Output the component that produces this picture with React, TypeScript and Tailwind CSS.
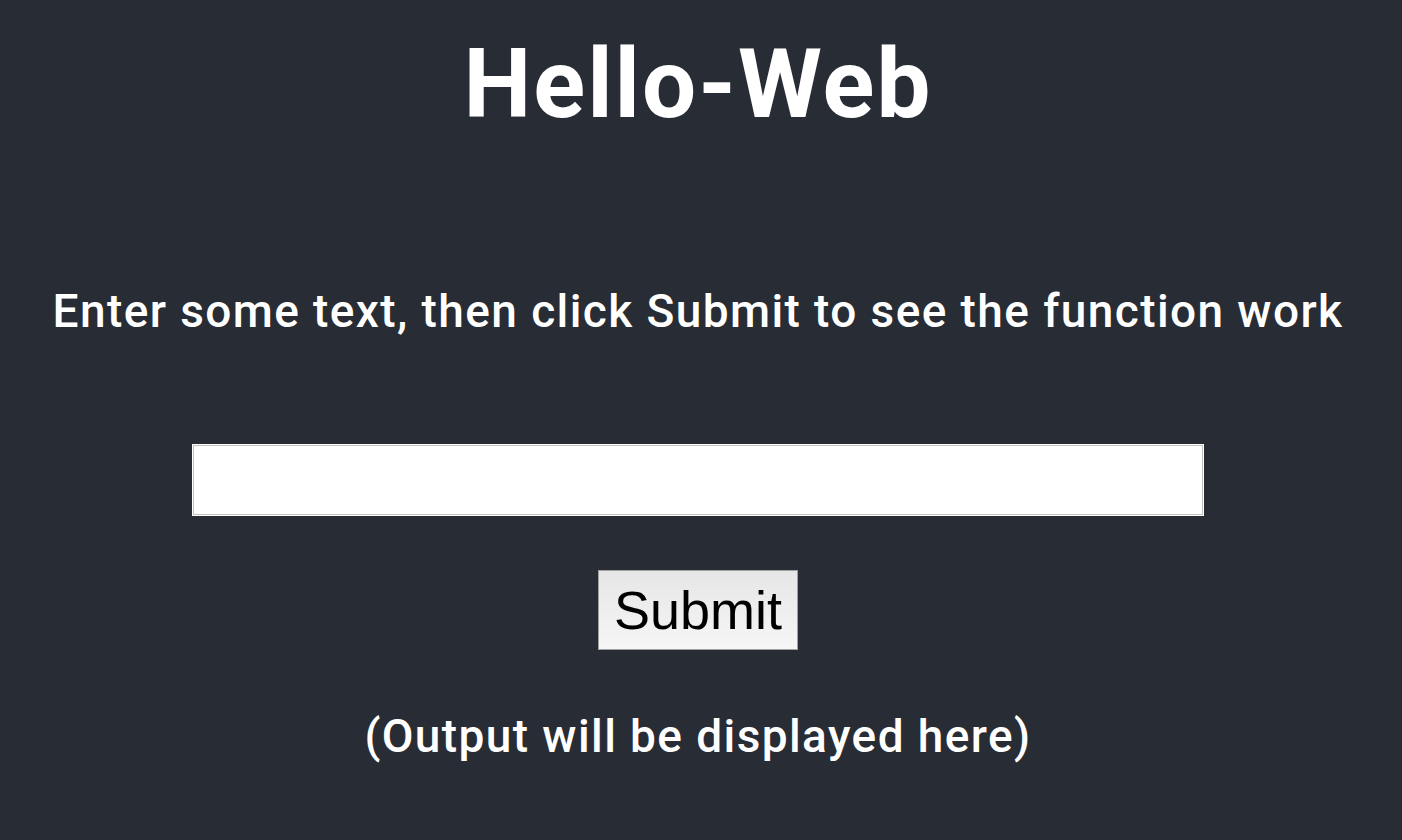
import { useState } from 'react';

export default function App() {
    const [text, setText] = useState('');
    const [output, setOutput] = useState('(Output will be displayed here)');

    return (
        <div className="min-h-screen bg-[#282c34] text-white flex flex-col items-center pt-[36px] pr-[6px] font-['Roboto',sans-serif]">
            <h1 className="text-[96px] leading-none font-bold tracking-[2px]">Hello-Web</h1>

            <p className="mt-[156px] text-[46px] leading-none font-medium tracking-[1.4px]">
                Enter some text, then click Submit to see the function work
            </p>

            <input
                type="text"
                value={text}
                onChange={(e) => setText(e.target.value)}
                className="mt-[110px] w-[1012px] h-[72px] bg-white text-black border border-white shadow-[inset_0_0_0_1px_#c2c2c2] outline-none px-3 text-3xl"
            />

            <button
                onClick={() => setOutput(text || '(Output will be displayed here)')}
                className="mt-[54px] w-[200px] h-[80px] border border-[#a0a0a0] bg-gradient-to-b from-[#e6e6e6] to-[#f6f6f6] text-black text-[54px] leading-none font-['Liberation_Sans',sans-serif] flex items-center justify-center"
            >
                Submit
            </button>

            <p className="mt-[63px] text-[46px] leading-none font-medium tracking-[1.4px]">{output}</p>
        </div>
    );
}
